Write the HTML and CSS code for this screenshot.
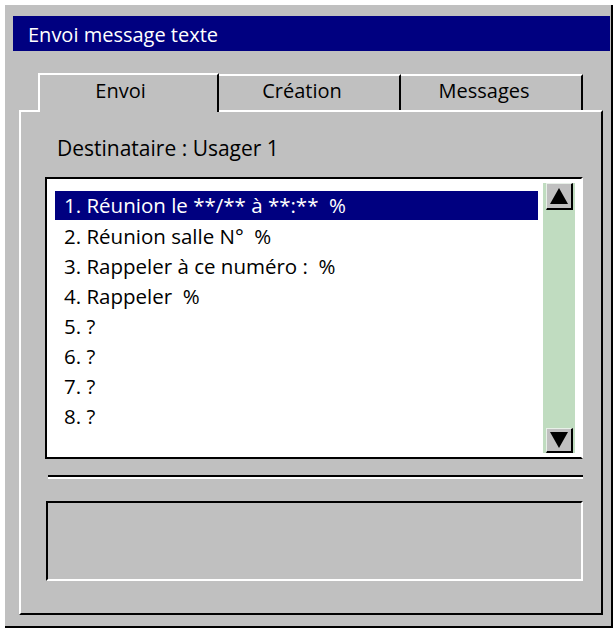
FILE: index.html
```html
<!DOCTYPE html>
<html lang="fr">
<head>
<meta charset="utf-8">
<title>Envoi message texte</title>
<link rel="stylesheet" href="styles.css">
</head>
<body>
<div class="window">
  <div class="titlebar">Envoi message texte</div>
  <div class="tabs-area">
    <div class="tabs">
      <div class="tab active">Envoi</div>
      <div class="tab">Création</div>
      <div class="tab">Messages</div>
    </div>
    <div class="panel">
      <div class="dest">Destinataire : Usager 1</div>
      <div class="listbox">
        <ul class="items">
          <li class="item selected">1. Réunion le **/** à **:**&nbsp; %</li>
          <li class="item">2. Réunion salle N°&nbsp; %</li>
          <li class="item">3. Rappeler à ce numéro :&nbsp; %</li>
          <li class="item">4. Rappeler&nbsp; %</li>
          <li class="item">5. ?</li>
          <li class="item">6. ?</li>
          <li class="item">7. ?</li>
          <li class="item">8. ?</li>
        </ul>
        <div class="scrollbar">
          <div class="sbtn">
            <svg width="20" height="18" viewBox="0 0 20 18"><polygon points="10,1 19,17 1,17" fill="#000"/></svg>
          </div>
          <div class="track"></div>
          <div class="sbtn down">
            <svg width="20" height="18" viewBox="0 0 20 18"><polygon points="1,1 19,1 10,17" fill="#000"/></svg>
          </div>
        </div>
      </div>
      <div class="separator"></div>
      <div class="msgbox"></div>
    </div>
  </div>
</div>
</body>
</html>
```
FILE: styles.css
```css
html, body {
  margin: 0;
  padding: 0;
  background: #ffffff;
}
body {
  font-family: "Open Sans", Lato, sans-serif;
  color: #000;
}
.window {
  margin: 5px 0 0 5px;
  width: 606px;
  height: 621px;
  background: #c0c0c0;
  border-right: 2px solid #000;
  border-bottom: 2px solid #000;
  display: flex;
  flex-direction: column;
}
.titlebar {
  margin: 11px 1px 0 8px;
  height: 35px;
  line-height: 38px;
  background: #000080;
  color: #fff;
  padding-left: 15px;
  font-size: 20px;
}
.tabs-area {
  margin: 22px 8px 0 14px;
  display: flex;
  flex-direction: column;
  flex: 1;
}
.tabs {
  display: flex;
  padding-left: 19px;
  height: 37px;
  position: relative;
  z-index: 1;
}
.tab {
  box-sizing: border-box;
  width: 182px;
  height: 36px;
  margin-top: 1px;
  padding-right: 14px;
  border-top: 2px solid #fff;
  border-right: 2px solid #000;
  text-align: center;
  font-size: 20px;
  line-height: 30px;
}
.tab.active {
  width: 181px;
  height: 39px;
  margin-top: 0;
  padding-right: 16px;
  border-left: 2px solid #fff;
  background: #c0c0c0;
  line-height: 32px;
}
.panel {
  flex: 1;
  margin-bottom: 11px;
  border-top: 2px solid #fff;
  border-left: 2px solid #fff;
  border-right: 2px solid #000;
  border-bottom: 2px solid #000;
  display: flex;
  flex-direction: column;
  padding: 0 18px 0 24px;
}
.dest {
  font-size: 21px;
  height: 65px;
  line-height: 24px;
  padding-left: 12px;
  padding-top: 24px;
  box-sizing: border-box;
}
.listbox {
  height: 282px;
  box-sizing: border-box;
  background: #fff;
  border-top: 2px solid #000;
  border-left: 2px solid #000;
  border-bottom: 2px solid #000;
  border-right: 2px solid #fff;
  display: flex;
  padding: 0 6px 0 8px;
}
.items {
  list-style: none;
  margin: 0;
  padding: 12px 0 0 0;
  flex: 1;
}
.item {
  height: 30px;
  line-height: 30px;
  font-size: 20.5px;
  padding-left: 9px;
  white-space: pre;
}
.item.selected {
  background: #000080;
  color: #fff;
  height: 29px;
  line-height: 29px;
  margin-bottom: 1px;
  margin-right: 5px;
}
.scrollbar {
  width: 32px;
  margin: 4px 0 4px 0;
  background: #c0dcc0;
  display: flex;
  flex-direction: column;
  align-items: flex-end;
}
.sbtn {
  box-sizing: border-box;
  width: 27px;
  height: 27px;
  margin-right: 2px;
  background: #c0c0c0;
  border-right: 2px solid #000;
  border-bottom: 2px solid #000;
  border-top: 1px solid #e8f0e8;
  border-left: 1px solid #e8f0e8;
  display: flex;
  align-items: center;
  justify-content: center;
}
.sbtn.down {
  height: 25px;
}
.track {
  flex: 1;
}
.separator {
  margin: 16px 0 0 3px;
  height: 2px;
  background: #000;
  border-bottom: 2px solid #fff;
}
.msgbox {
  margin: 22px 0 0 1px;
  height: 80px;
  box-sizing: border-box;
  border-top: 2px solid #000;
  border-left: 2px solid #000;
  border-right: 2px solid #fff;
  border-bottom: 2px solid #fff;
}
```
